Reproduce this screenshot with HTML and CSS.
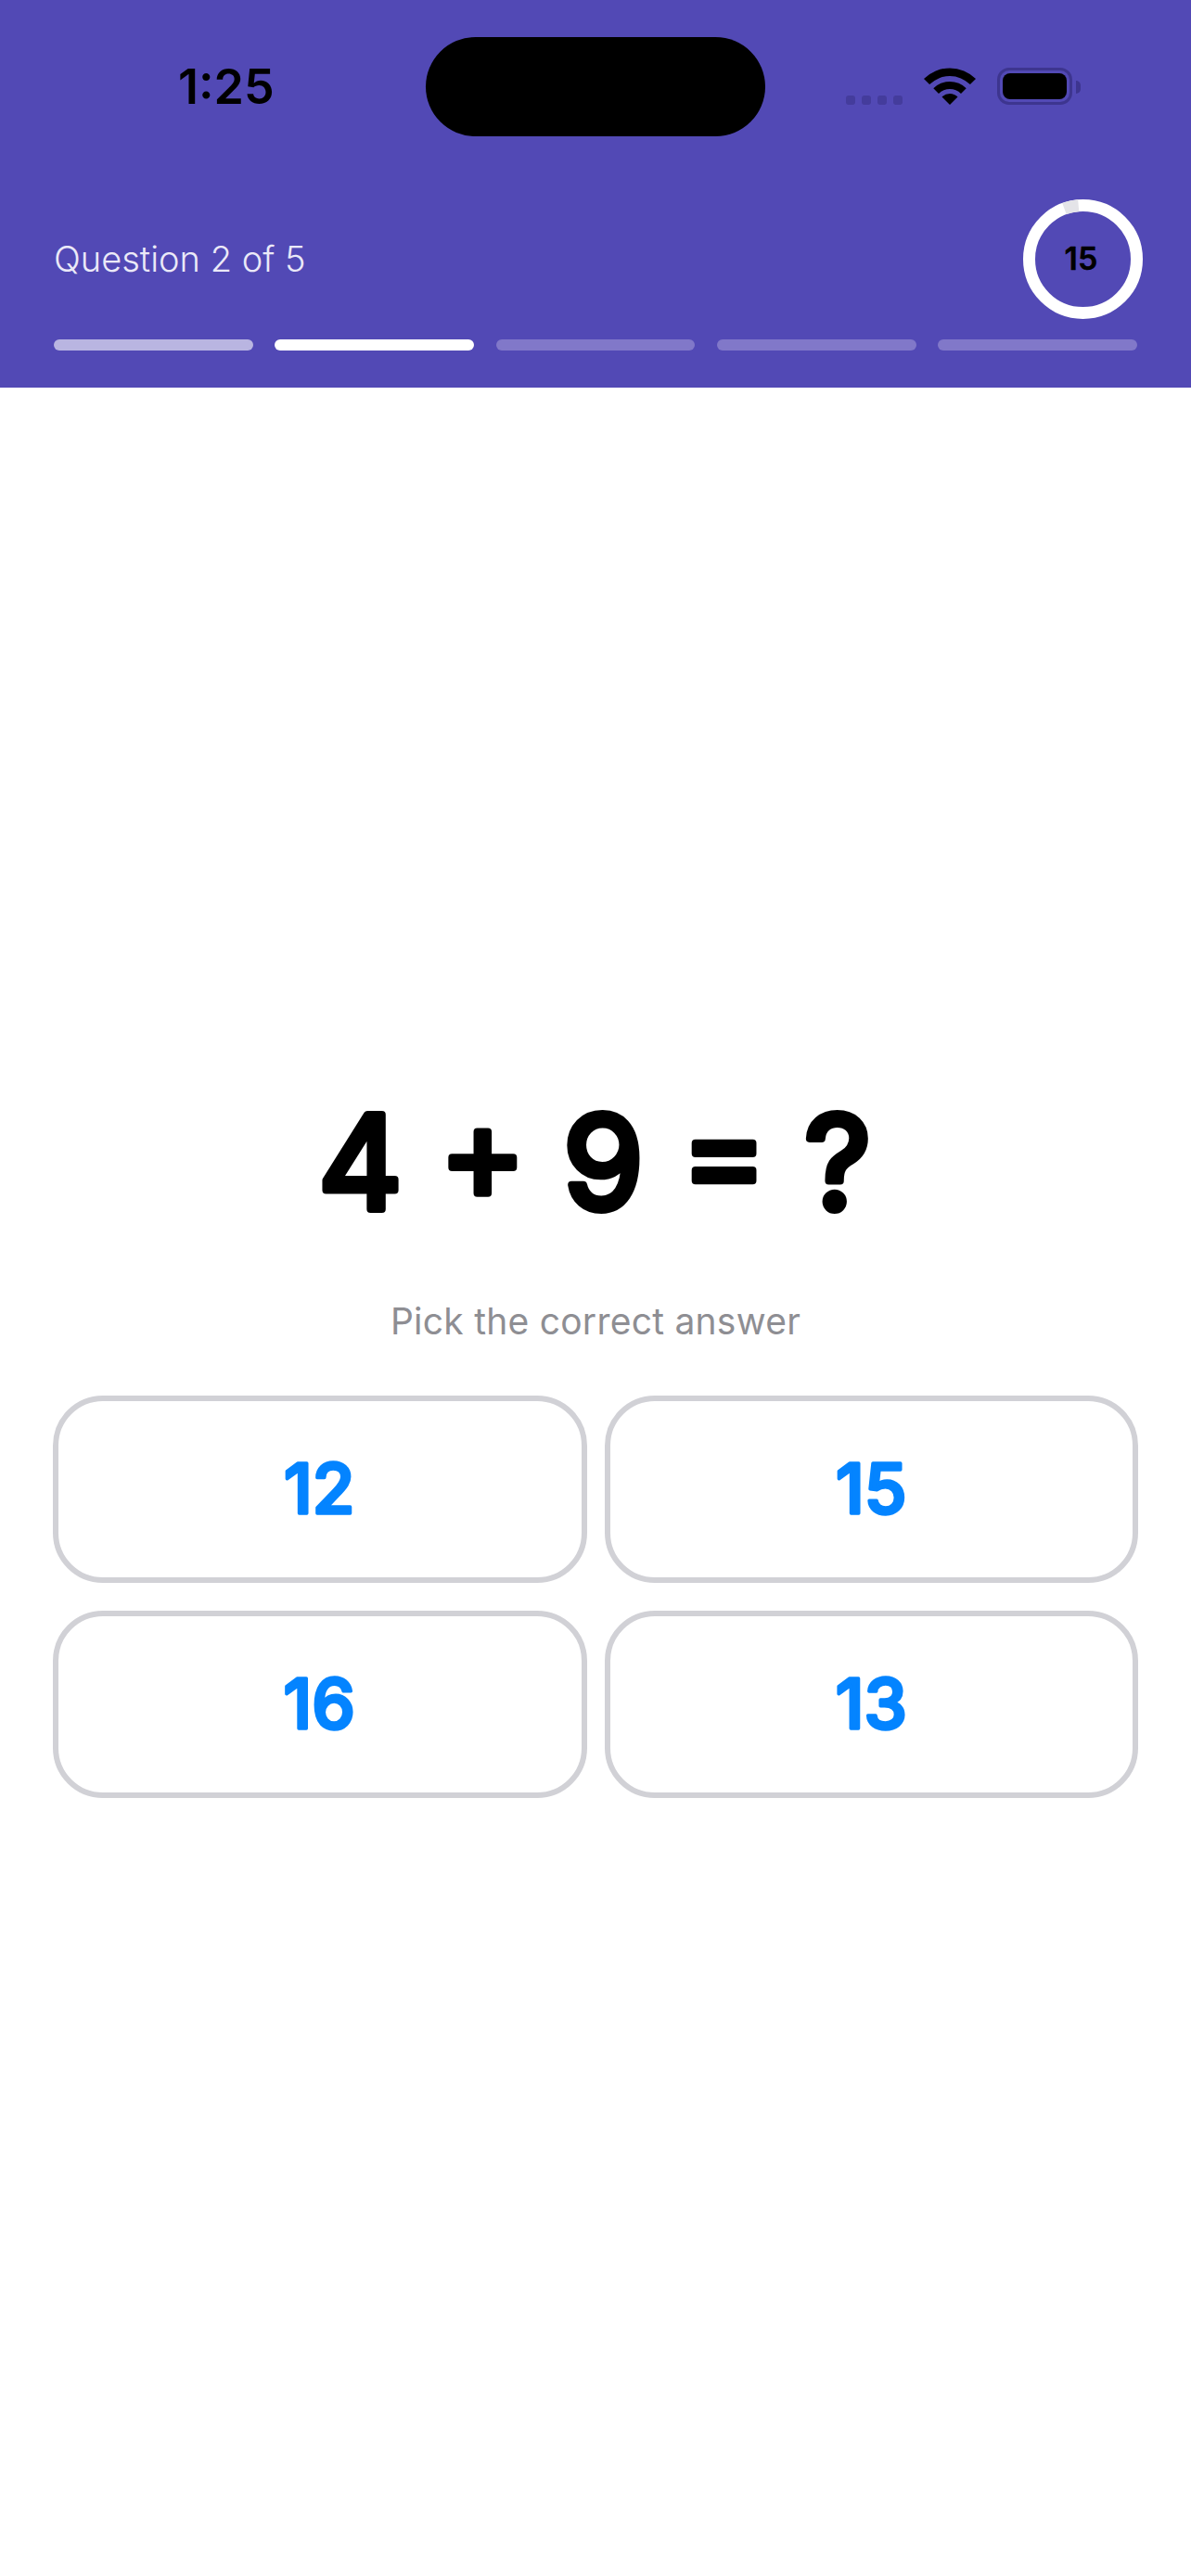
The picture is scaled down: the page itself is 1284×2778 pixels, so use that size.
FILE: index.html
```html
<!DOCTYPE html>
<html>
    <head lang="en">
        <meta charset="UTF-8">
        <title>Quiz</title>
        <link rel="stylesheet" href="styles.css">
    </head>
    <body>
        <div class="header">
            <div class="status">
                <span class="time">1:25</span>
                <div class="island"></div>
                <div class="signal"><i></i><i></i><i></i><i></i></div>
                <svg class="wifi" width="56" height="40" viewBox="0 0 56 40">
                    <path d="M0 12 A39.6 39.6 0 0 1 56 12 L49.9 18.1 A31 31 0 0 0 6.1 18.1 Z"/>
                    <path d="M10.3 22.3 A25 25 0 0 1 45.7 22.3 L40 28 A17 17 0 0 0 16 28 Z"/>
                    <path d="M19.5 31.5 A12 12 0 0 1 36.5 31.5 L28 40 Z"/>
                </svg>
                <div class="battery"><div class="battery-fill"></div></div>
                <div class="battery-nub"></div>
            </div>
            <div class="info">
                <span class="question">Question 2 of 5</span>
                <div class="timer">
                    <svg width="129" height="129" viewBox="0 0 129 129">
                        <circle class="ring" cx="64.5" cy="64.5" r="58"/>
                        <path class="ring-used" d="M44.5 10.1 A58 58 0 0 1 59.7 6.7"/>
                        <text class="seconds" x="62.4" y="76">15</text>
                    </svg>
                </div>
            </div>
            <div class="bars">
                <div class="bar done"></div>
                <div class="bar current"></div>
                <div class="bar"></div>
                <div class="bar"></div>
                <div class="bar"></div>
            </div>
        </div>
        <div class="main">
            <svg class="sum" width="1170" height="182" viewBox="0 0 1170 182">
                <text x="584" y="125.5">4 + 9 = ?</text>
            </svg>
            <div class="hint">Pick the correct answer</div>
            <div class="answers">
                <div class="answer"><svg viewBox="0 0 563 190"><text x="281" y="121">12</text></svg></div>
                <div class="answer"><svg viewBox="0 0 563 190"><text x="281" y="121">15</text></svg></div>
                <div class="answer"><svg viewBox="0 0 563 190"><text x="281" y="121">16</text></svg></div>
                <div class="answer"><svg viewBox="0 0 563 190"><text x="281" y="121">13</text></svg></div>
            </div>
        </div>
    </body>
</html>
```

FILE: styles.css
```css
* {
    margin: 0;
    padding: 0;
    box-sizing: border-box;
}
body {
    background: #ffffff;
    font-family: "Inter", "Liberation Sans", sans-serif;
}
text {
    text-anchor: middle;
    stroke-linejoin: round;
    stroke-linecap: round;
}
.header {
    height: 418px;
    background: #5249b5;
    padding: 40px 58px 0;
}
.status {
    height: 107px;
    display: flex;
    align-items: flex-start;
}
.time {
    margin: 25px 0 0 134px;
    width: 267px;
    font-size: 52px;
    line-height: 58px;
    font-weight: 600;
    color: #000000;
}
.island {
    width: 366px;
    height: 107px;
    border-radius: 54px;
    background: #000000;
}
.signal {
    display: flex;
    gap: 7px;
    margin: 63px 23px 0 87px;
}
.signal i {
    width: 10px;
    height: 10px;
    border-radius: 3px;
    background: #443c9c;
}
.wifi {
    margin-top: 33px;
    fill: #000000;
}
.battery {
    margin: 33px 0 0 23px;
    width: 81px;
    height: 40px;
    border: 3px solid #3d358f;
    border-radius: 13px;
    padding: 3px;
}
.battery-fill {
    height: 100%;
    background: #000000;
    border-radius: 8px;
}
.battery-nub {
    margin: 47px 0 0 4px;
    width: 5px;
    height: 14px;
    background: #3d358f;
    border-radius: 0 5px 5px 0;
}
.info {
    display: flex;
    justify-content: space-between;
    align-items: center;
    margin: 68px -6px 22px 0;
}
.question {
    margin-bottom: 2px;
    font-size: 38px;
    font-weight: 300;
    color: #ebe9f8;
}
.timer {
    width: 129px;
    height: 129px;
}
.timer svg {
    display: block;
}
.ring {
    fill: none;
    stroke: #ffffff;
    stroke-width: 13;
}
.ring-used {
    fill: none;
    stroke: #e4e4e8;
    stroke-width: 13;
}
.seconds {
    font-size: 34px;
    font-weight: 600;
    fill: #000000;
    stroke: #000000;
    stroke-width: 0.5;
}
.bars {
    display: flex;
    gap: 23.5px;
}
.bar {
    flex: 1;
    height: 12px;
    border-radius: 6px;
    background: #8178c9;
}
.bar.done {
    background: #b9b5e1;
}
.bar.current {
    background: #ffffff;
}
.main {
    padding: 0 57px;
}
.sum {
    display: block;
    margin-top: 760px;
    overflow: visible;
    font-size: 140px;
    font-weight: 400;
    word-spacing: 1px;
    fill: #000000;
    stroke: #000000;
    stroke-width: 8;
}
.hint {
    margin-top: 42px;
    text-align: center;
    font-size: 39px;
    letter-spacing: 0.25px;
    line-height: 46px;
    color: #8e8e93;
}
.answers {
    margin-top: 57px;
    display: grid;
    grid-template-columns: 1fr 1fr;
    column-gap: 19px;
    row-gap: 30px;
}
.answer {
    height: 202px;
    border: 6px solid #d1d1d6;
    border-radius: 54px;
}
.answer svg {
    display: block;
    width: 100%;
    height: 100%;
    font-size: 74px;
    font-weight: 500;
    fill: #0484ff;
    stroke: #0484ff;
    stroke-width: 3.5;
}
```
